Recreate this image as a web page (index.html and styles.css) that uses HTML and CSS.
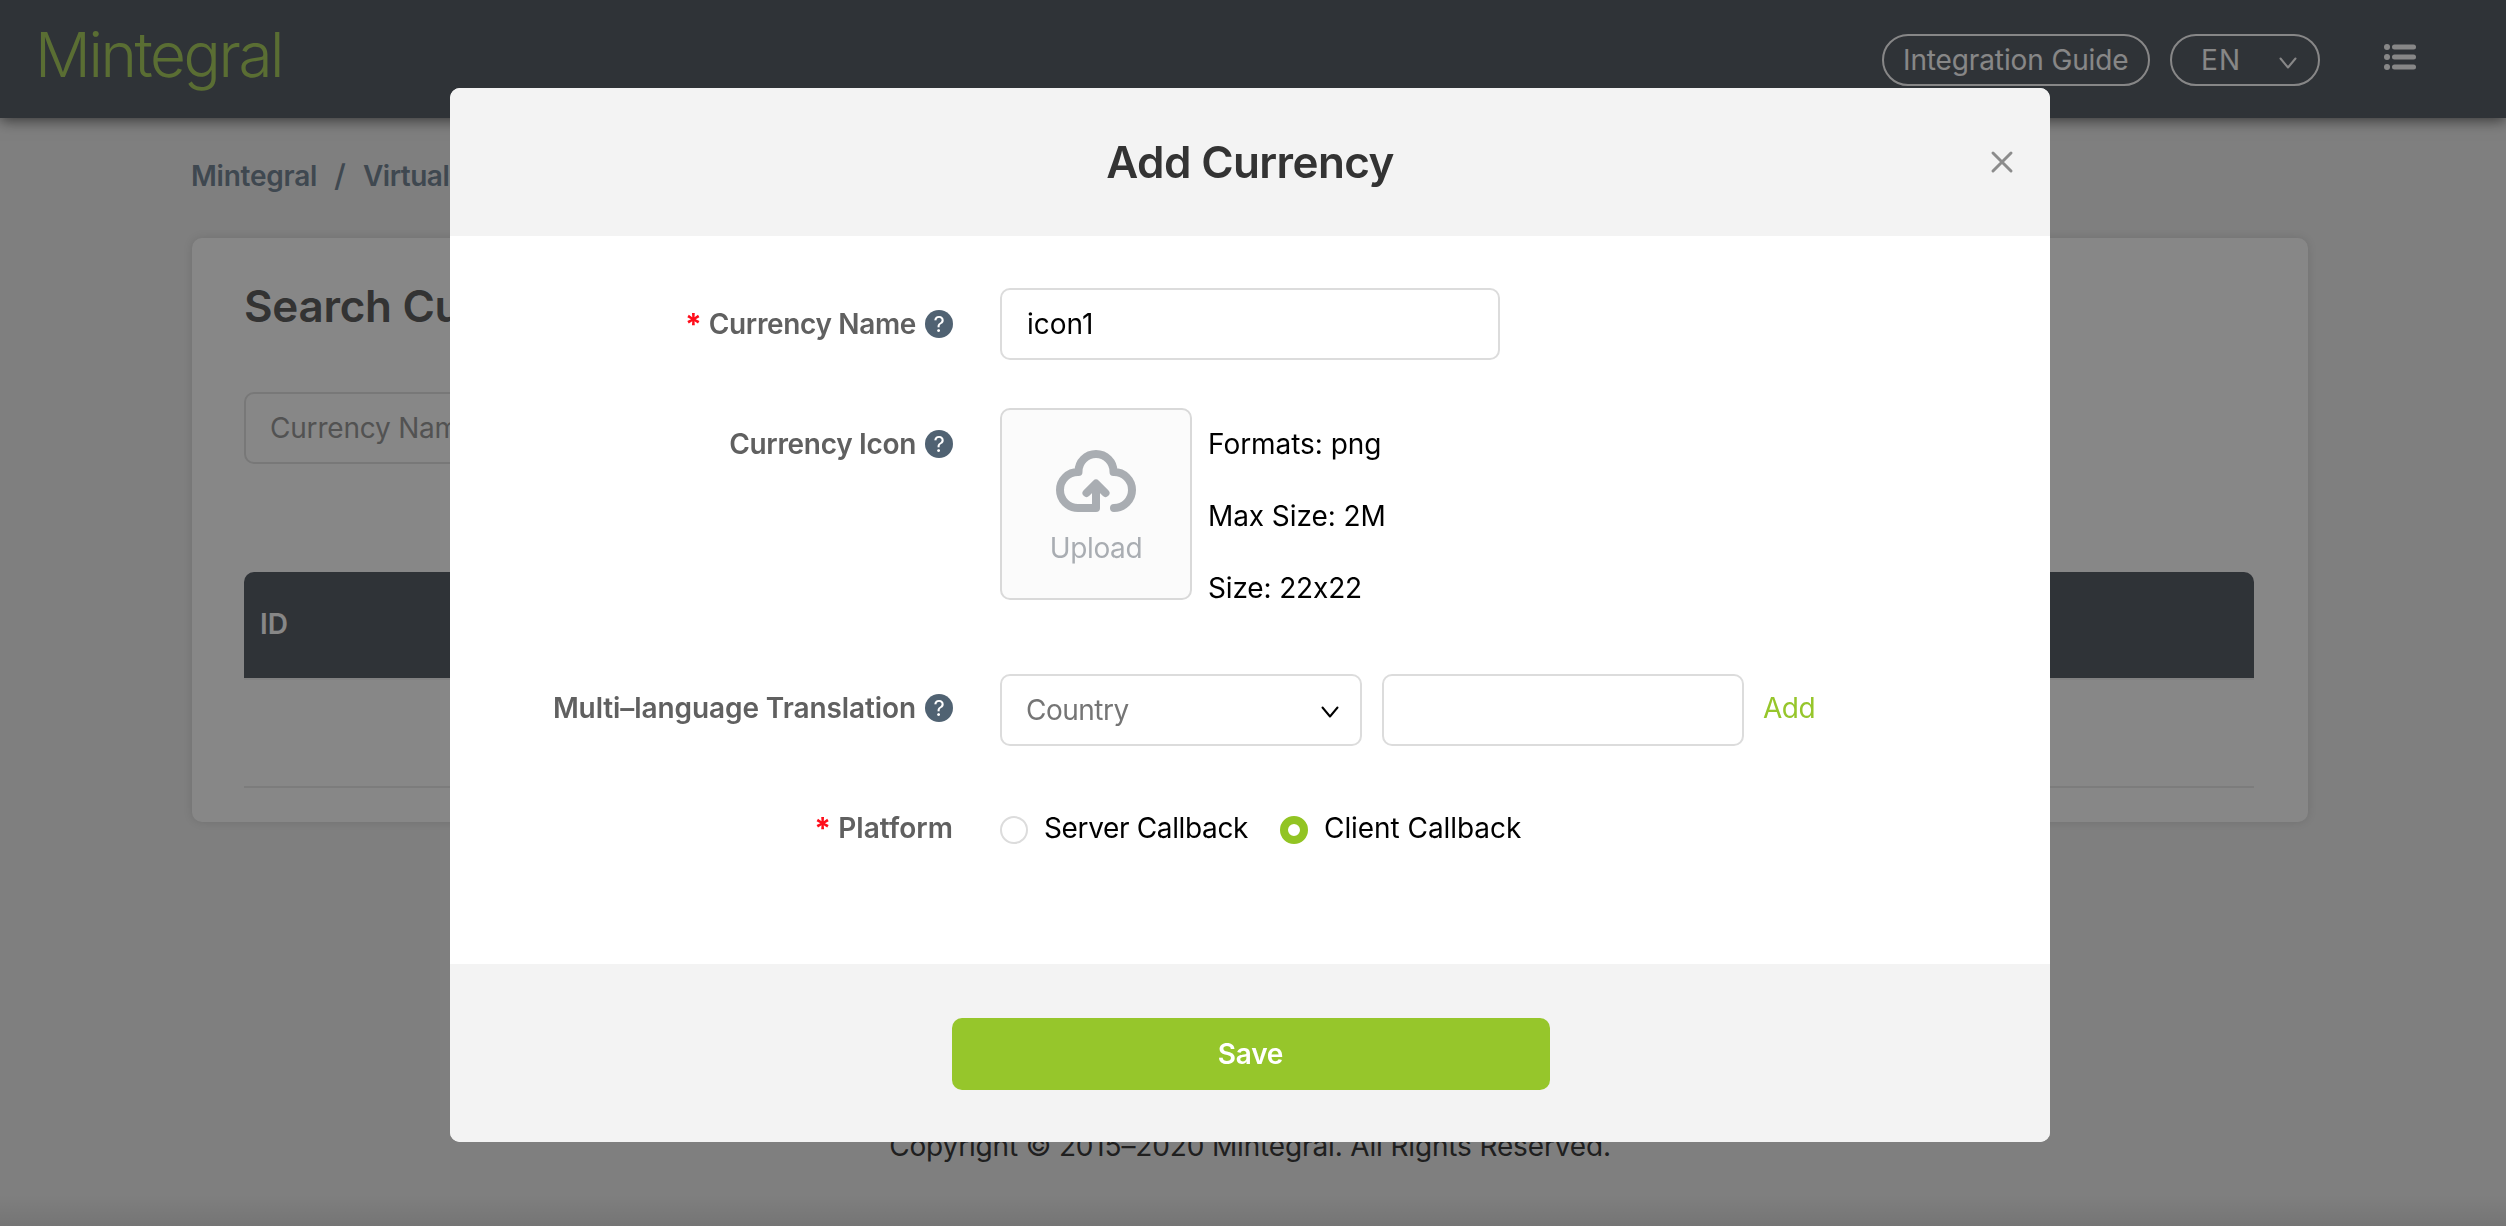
FILE: index.html
```
<!DOCTYPE html>
<html lang="en">
<head>
<meta charset="utf-8">
<title>Mintegral - Virtual Currency</title>
<link rel="stylesheet" href="styles.css">
</head>
<body>
<header class="topbar">
  <div class="logo">Mintegral</div>
  <nav class="topnav">
    <a class="pill guide">Integration Guide</a>
    <a class="pill lang"><span class="lang-name">EN</span>
      <svg class="chevron" width="18" height="12" viewBox="0 0 18 12"><path d="M1.500 1.500 9 10.500l7.500-9"/></svg>
    </a>
    <svg class="menu-icon" width="32" height="26" viewBox="0 0 32 26">
      <circle cx="3" cy="3" r="3"/><rect x="8" y="0.500" width="24" height="5" rx="2.500"/>
      <circle cx="3" cy="13" r="3"/><rect x="8" y="10.500" width="24" height="5" rx="2.500"/>
      <circle cx="3" cy="23" r="3"/><rect x="8" y="20.500" width="24" height="5" rx="2.500"/>
    </svg>
  </nav>
</header>

<main class="page">
  <div class="breadcrumb"><span class="crumb">Mintegral</span><span class="slash">/</span><span class="crumb-last">Virtual Currency</span></div>
  <section class="card">
    <h2 class="card-title">Search Currency</h2>
    <div class="search-box">Currency Name</div>
    <div class="table-head">ID</div>
    <div class="table-body"></div>
  </section>
</main>
<footer class="copyright">Copyright © 2015–2020 Mintegral. All Rights Reserved.</footer>

<div class="overlay">
  <div class="modal">
    <div class="modal-head">
      <h1 class="modal-title">Add Currency</h1>
      <svg class="close" width="24" height="24" viewBox="0 0 24 24"><path d="M3 3l18 18M21 3 3 21"/></svg>
    </div>
    <form class="modal-body">
      <div class="row row-name">
        <div class="label"><span class="star">*</span><span class="l-name">Currency Name</span>
          <span class="help">?</span></div>
        <div class="field name-field">icon1</div>
      </div>
      <div class="row row-icon">
        <div class="label"><span class="l-icon">Currency Icon</span>
          <span class="help">?</span></div>
        <div class="upload">
          <svg class="cloud" width="80" height="64" viewBox="0 0 80 64">
            <path d="M40 35v23H22a18 18 0 0 1 0-36h.5v-.5a17.500 17.500 0 0 1 35 0v.5h.5a18 18 0 0 1 0 36"/>
            <path d="M30.500 43l9.500-9.500 9.500 9.500"/>
          </svg>
          <span class="upload-text">Upload</span>
        </div>
        <div class="hints"><span class="h-format">Formats: png</span><span class="h-max">Max Size: 2M</span><span class="h-size">Size: 22x22</span></div>
      </div>
      <div class="row row-lang">
        <div class="label"><span class="l-multi">Multi–language Translation</span>
          <span class="help">?</span></div>
        <div class="field select"><span>Country</span>
          <svg class="chevron" width="18" height="12" viewBox="0 0 18 12"><path d="M1.500 1.500 9 10.500l7.500-9"/></svg>
        </div>
        <div class="field word-field"></div>
        <a class="add">Add</a>
      </div>
      <div class="row row-platform">
        <div class="label"><span class="star">*</span><span class="l-platform">Platform</span></div>
        <span class="radio"></span><span class="r-server">Server Callback</span>
        <span class="radio checked"></span><span class="r-client">Client Callback</span>
      </div>
    </form>
    <div class="modal-foot"><div class="save">Save</div></div>
  </div>
</div>
</body>
</html>
```
FILE: styles.css
```
* { box-sizing: border-box; }
body {
  margin: 0;
  height: 1226px;
  overflow: hidden;
  background: linear-gradient(#f0f0f0 1196px, #dcdcdc 1226px);
  font: 400 28px/36px Inter, "Liberation Sans", sans-serif;
  color: #000;
  white-space: nowrap;
}

/* top bar */
.topbar {
  height: 118px;
  display: flex;
  justify-content: space-between;
  background: #5a6069;
  box-shadow: 0 2px 14px rgba(0, 0, 0, .6);
}
.logo {
  padding: 15px 0 0 35px;
  font-size: 62px;
  line-height: 80px;
  font-weight: 300;
  letter-spacing: -2.42px;
  color: #abd060;
}
.topnav {
  display: flex;
  align-items: flex-start;
  padding: 34px 90px 0 0;
}
.pill {
  height: 52px;
  display: flex;
  align-items: center;
  border: 2px solid #fff;
  border-radius: 26px;
  color: #fff;
}
.guide { width: 268px; padding-left: 19px; letter-spacing: -.12px; }
.lang { width: 150px; margin-left: 20px; padding: 0 21px 0 29px; justify-content: space-between; }
.lang-name { letter-spacing: 1.2px; }
.chevron path { fill: none; stroke: currentColor; stroke-width: 2; stroke-linecap: round; stroke-linejoin: round; }
.lang .chevron { margin-top: 5px; }
.menu-icon { margin: 10px 0 0 64px; fill: #fff; }

/* page behind the dialog */
.page { padding: 40px 198px 0 192px; }
.breadcrumb { display: flex; margin-bottom: 44px; font-weight: 600; color: #788898; }
.crumb { width: 143px; margin-left: -1px; letter-spacing: -.24px; }
.slash { width: 29px; font-weight: 500; transform: scale(1.15, 1.1); transform-origin: left center; }
.crumb-last { letter-spacing: -.5px; }
.card {
  height: 584px;
  padding: 42px 54px 0 52px;
  border-radius: 10px;
  background: #fff;
  box-shadow: 0 0 10px rgba(0, 0, 0, .12);
}
.card-title { margin: 0; font-size: 44px; line-height: 52px; font-weight: 600; letter-spacing: -.29px; color: #606060; }
.search-box {
  width: 500px;
  height: 72px;
  margin-top: 60px;
  padding: 16px 0 0 24px;
  border: 2px solid #e2e2e2;
  border-radius: 10px;
  letter-spacing: -.2px;
  color: #9b9b9b;
}
.table-head {
  height: 106px;
  margin-top: 108px;
  padding: 34px 16px;
  border-radius: 10px 10px 0 0;
  background: #5a6069;
  font-weight: 600;
  color: #fff;
}
.table-body { height: 110px; border-top: 2px solid #f4f4f4; border-bottom: 2px solid #ebebeb; }
.copyright { margin-top: 306px; text-align: center; letter-spacing: -.15px; color: #3c3c3c; padding-right: 6px; }

/* dialog */
.overlay { position: fixed; inset: 0; padding: 88px 0 0 450px; background: rgba(0, 0, 0, .47); }
.modal { width: 1600px; border-radius: 10px; overflow: hidden; background: #fff; }
.modal-head {
  height: 148px;
  display: flex;
  align-items: center;
  justify-content: center;
  background: #f3f3f3;
}
.modal-title { margin: 0; flex: 1; padding-left: 60px; text-align: center; font-size: 44px; line-height: 52px; font-weight: 600; letter-spacing: -.62px; color: #333; }
.close { margin-right: 36px; fill: none; stroke: #8c8c8c; stroke-width: 3; stroke-linecap: round; }
.modal-body { height: 728px; padding-top: 52px; }
.row { display: flex; }
.row-name { height: 120px; }
.row-icon { height: 266px; }
.row-lang { height: 120px; }
.label {
  width: 503px;
  height: 72px;
  margin-right: 47px;
  display: flex;
  align-items: center;
  justify-content: flex-end;
  font-weight: 600;
  color: #606060;
}
.row-lang .label, .row-platform .label { height: 68px; }
.star { margin: 0 7px 0 0; color: #ff0d1a; font-size: 30px; font-weight: 700; }
.help {
  width: 28px;
  height: 28px;
  margin-left: 9px;
  border-radius: 50%;
  background: #506272;
  color: #fff;
  font-size: 22px;
  line-height: 28px;
  font-weight: 400;
  text-align: center;
}
.l-name { letter-spacing: -.35px; }
.l-icon { letter-spacing: -.32px; }
.l-multi { letter-spacing: -.09px; }
.l-platform { letter-spacing: .06px; }
.field {
  height: 72px;
  padding: 16px 24px;
  border: 2px solid #dcdcdc;
  border-radius: 10px;
}
.name-field { width: 500px; padding-left: 25px; }
.upload {
  width: 192px;
  height: 192px;
  padding-top: 40px;
  display: flex;
  flex-direction: column;
  align-items: center;
  border: 2px solid #d9d9d9;
  border-radius: 10px;
  background: #fbfbfb;
  color: #a9adb2;
}
.cloud { fill: none; stroke: #a9adb2; stroke-width: 8; stroke-linecap: round; stroke-linejoin: round; }
.upload-text { margin-top: 14px; line-height: 40px; letter-spacing: -.4px; }
.hints { padding-left: 16px; display: flex; flex-direction: column; line-height: 72px; }
.h-format { letter-spacing: -.04px; }
.h-max { letter-spacing: -.08px; }
.h-size { letter-spacing: -.15px; }
.select { width: 362px; display: flex; justify-content: space-between; color: #757575; letter-spacing: -.5px; }
.select .chevron { margin: 14px -3px 0 0; color: #000; }
.word-field { width: 362px; margin-left: 20px; }
.add { margin-left: 19px; line-height: 68px; letter-spacing: -.5px; color: #96c62b; }
.row-platform { line-height: 68px; }
.radio { width: 28px; height: 28px; margin-top: 22px; border: 2px solid #dcdcdc; border-radius: 50%; }
.radio.checked { border: 8px solid #92c423; }
.r-server { width: 236px; padding-left: 16px; letter-spacing: -.36px; }
.r-server + .radio { margin-left: 16px; }
.r-client { padding-left: 16px; letter-spacing: -.06px; }
.modal-foot { height: 178px; padding: 54px 0 0 502px; background: #f3f3f3; }
.save {
  width: 598px;
  height: 72px;
  padding-right: 1px;
  border-radius: 10px;
  background: #96c62b;
  line-height: 72px;
  text-align: center;
  font-weight: 600;
  letter-spacing: -.25px;
  color: #fff;
}
```
